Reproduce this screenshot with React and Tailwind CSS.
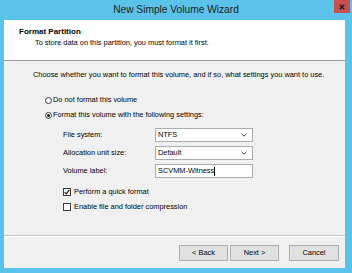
import React from "react";

const font = "font-['Liberation_Sans',Arial,sans-serif]";

const Radio = ({ checked, label }) => (
  <div className="flex items-center h-[10px]">
    <span className="w-[7px] h-[7px] rounded-full border border-[#3c3c3c] bg-white flex items-center justify-center">
      {checked && <span className="w-[3px] h-[3px] rounded-full bg-[#1a1a1a]" />}
    </span>
    <span className="ml-[1px]">{label}</span>
  </div>
);

const Check = ({ checked, label }) => (
  <div className="flex items-center h-[10px]">
    <span className="w-[8px] h-[8px] border border-[#3c3c3c] bg-white flex items-center justify-center">
      {checked && (
        <svg width="6" height="6" viewBox="0 0 6 6">
          <polyline points="0.6,3.2 2.3,4.9 5.4,0.9" fill="none" stroke="#1a1a1a" strokeWidth="1.2" />
        </svg>
      )}
    </span>
    <span className="ml-[3px]">{label}</span>
  </div>
);

const Chevron = () => (
  <svg width="6" height="4" viewBox="0 0 6 4">
    <polyline points="0.5,0.8 3,3.2 5.5,0.8" fill="none" stroke="#444" strokeWidth="1" />
  </svg>
);

const Field = ({ label, children }) => (
  <div className="flex items-center h-[14px]">
    <div className="w-[92px]">{label}</div>
    {children}
  </div>
);

const Select = ({ value }) => (
  <div className="w-[98px] h-[14px] bg-white border border-[#acacac] flex items-center justify-between pl-[2px] pr-[5px]">
    <span>{value}</span>
    <Chevron />
  </div>
);

const Button = ({ children, className = "" }) => (
  <div
    className={`h-[16px] bg-[#e1e1e1] border border-[#adadad] flex items-center justify-center ${className}`}
  >
    {children}
  </div>
);

export default function App() {
  return (
    <div className={`w-[352px] h-[273px] bg-[#5bc2ea] flex flex-col text-[7.4px] leading-[10px] text-black ${font}`}>
      <div className="relative h-[20px] flex items-center justify-center shrink-0">
        <span className="text-[10.2px] text-[#1e1e1e]">New Simple Volume Wizard</span>
        <div className="absolute right-[2px] top-0 w-[16px] h-[13px] bg-[#c75050] flex items-center justify-center">
          <svg width="6" height="6" viewBox="0 0 6 6">
            <path d="M0.8 0.8L5.2 5.2M5.2 0.8L0.8 5.2" stroke="#1a1a1a" strokeWidth="1.4" />
          </svg>
        </div>
      </div>

      <div className="flex-1 ml-[4px] mr-[7px] mb-[5px] flex flex-col bg-[#f0f0f0]">
        <div className="h-[41px] bg-white border-b border-[#a0a0a0] pt-[7px] pl-[15px] shrink-0">
          <div className="font-bold text-[8px]">Format Partition</div>
          <div className="pl-[16px] mt-[1px]">To store data on this partition, you must format it first.</div>
        </div>

        <div className="flex-1 pt-[9px] pl-[29px] flex flex-col">
          <div>Choose whether you want to format this volume, and if so, what settings you want to use.</div>
          <div className="pl-[12px] mt-[15px] flex flex-col gap-[5px]">
            <Radio label="Do not format this volume" />
            <Radio checked label="Format this volume with the following settings:" />
          </div>
          <div className="pl-[30px] mt-[8px] flex flex-col gap-[4px]">
            <Field label="File system:">
              <Select value="NTFS" />
            </Field>
            <Field label="Allocation unit size:">
              <Select value="Default" />
            </Field>
            <Field label="Volume label:">
              <div className="w-[98px] h-[14px] bg-white border border-[#acacac] flex items-center pl-[2px]">
                <span>SCVMM-Witness</span>
                <span className="w-[1px] h-[9px] bg-black" />
              </div>
            </Field>
          </div>
          <div className="pl-[30px] mt-[9px] flex flex-col gap-[5px]">
            <Check checked label="Perform a quick format" />
            <Check label="Enable file and folder compression" />
          </div>
        </div>

        <div className="border-t border-[#c4c4c4] border-b border-b-white shrink-0" />
        <div className="h-[31px] pt-[8px] pr-[6px] flex justify-end shrink-0">
          <Button className="w-[49px]">&lt; Back</Button>
          <Button className="w-[49px] ml-[2px]">Next &gt;</Button>
          <Button className="w-[50px] ml-[10px]">Cancel</Button>
        </div>
      </div>
    </div>
  );
}
